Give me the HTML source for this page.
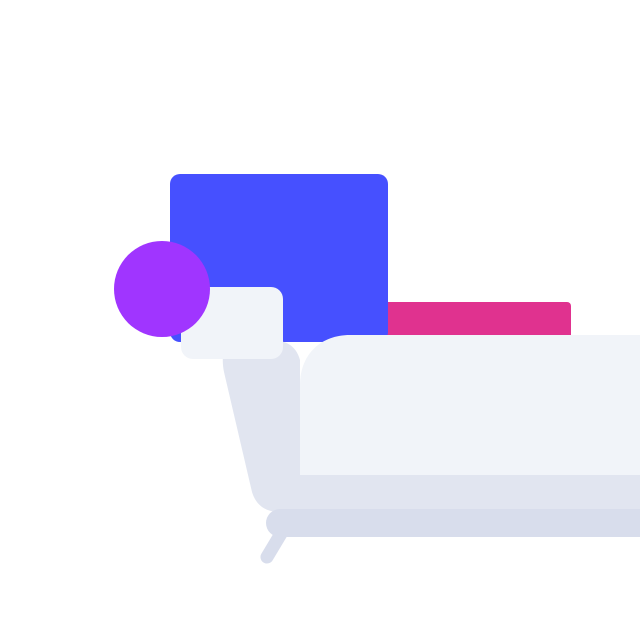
<!DOCTYPE html>
<html><head><style>html,body{margin:0;padding:0;background:#fff;width:640px;height:640px;overflow:hidden}</style></head>
<body>
<svg width="640" height="640" viewBox="0 0 640 640" xmlns="http://www.w3.org/2000/svg">
<rect x="378" y="302" width="193" height="40" rx="4" fill="#e0328f"/>
<rect x="170" y="174" width="218" height="168" rx="10" fill="#4650ff"/>
<path d="M300 360 C296 345 285 340 270 340 L240 340 C226 340 220 352 224 372 L252 492 C256 505 265 512 280 512 L640 512 L640 475 L300 475 Z" fill="#e1e5f0"/>
<path d="M300 475 L300 385 C300 355 320 335 350 335 L640 335 L640 475 Z" fill="#f1f4f9"/>
<line x1="282" y1="532" x2="267" y2="557" stroke="#d8ddec" stroke-width="13" stroke-linecap="round"/>
<rect x="266" y="509" width="400" height="28" rx="14" fill="#d8ddec"/>
<rect x="181" y="287" width="102" height="72" rx="12" fill="#f1f4f9"/>
<circle cx="162" cy="289" r="48" fill="#a035ff"/>
</svg>
</body></html>
